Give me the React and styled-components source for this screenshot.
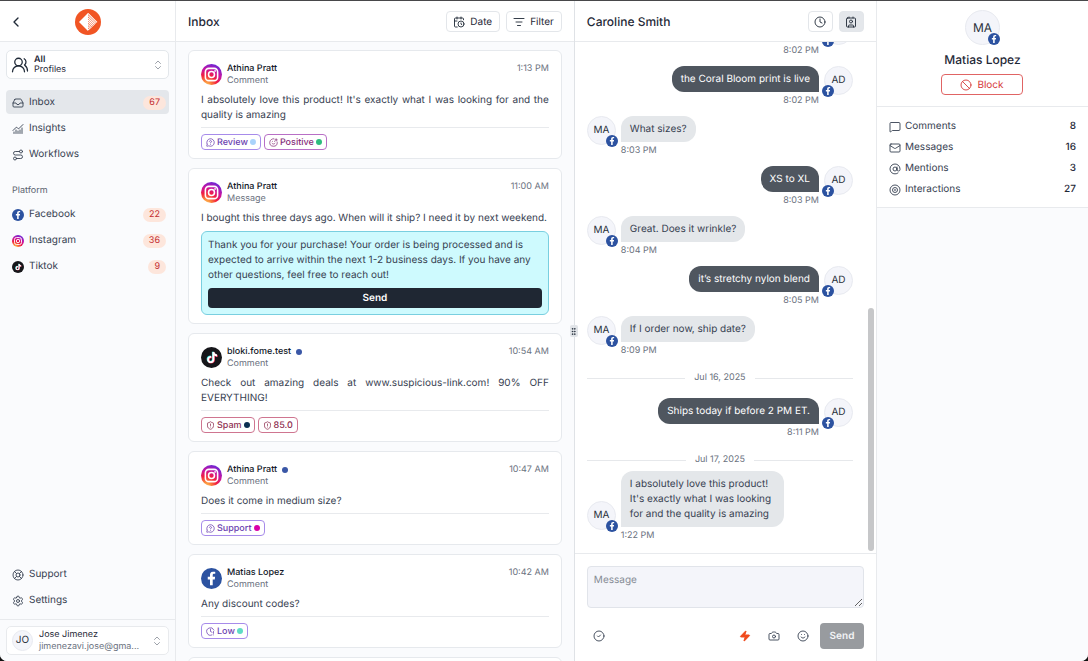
import styled, { createGlobalStyle } from "styled-components";
import {
  AtSign,
  Ban,
  CalendarClock,
  Camera,
  ChartNoAxesCombined,
  ChevronLeft,
  ChevronsUpDown,
  CircleCheck,
  Clock,
  ClockAlert,
  Contact,
  GripVertical,
  Inbox,
  LifeBuoy,
  ListFilter,
  Mail,
  MessageCircleQuestion,
  MessageSquare,
  Route,
  Settings,
  ShieldAlert,
  Smile,
  SmilePlus,
  UsersRound,
  Zap,
} from "lucide-react";
import { FaFacebookF, FaTiktok } from "react-icons/fa";

const RingIcon = ({ size, strokeWidth }) => (
  <svg
    width={size}
    height={size}
    viewBox="0 0 24 24"
    fill="none"
    stroke="currentColor"
    strokeWidth={strokeWidth}
  >
    <circle cx="12" cy="12" r="10" />
    <circle cx="12" cy="12" r="5" />
    <circle cx="12" cy="12" r="1" />
  </svg>
);

const mainLinks = [
  { label: "Inbox", Icon: Inbox, count: 67, active: true },
  { label: "Insights", Icon: ChartNoAxesCombined },
  { label: "Workflows", Icon: Route },
];

const platformLinks = [
  { label: "Facebook", platform: "facebook", count: 22 },
  { label: "Instagram", platform: "instagram", count: 36 },
  { label: "Tiktok", platform: "tiktok", count: 9 },
];

const footerLinks = [
  { label: "Support", Icon: LifeBuoy },
  { label: "Settings", Icon: Settings },
];

const tones = {
  violet: { border: "#a78bea", text: "#6b3fb0" },
  purple: { border: "#b86fc6", text: "#86307a" },
  rose: { border: "#cf7590", text: "#8f2f52" },
};

const conversations = [
  {
    id: 1,
    name: "Athina Pratt",
    kind: "Comment",
    platform: "instagram",
    time: "1:13 PM",
    text: "I absolutely love this product! It's exactly what I was looking for and the quality is amazing",
    tags: [
      { label: "Review", Icon: MessageCircleQuestion, tone: "violet", dot: "#a9d3fb" },
      { label: "Positive", Icon: SmilePlus, tone: "purple", dot: "#2dbd7e" },
    ],
  },
  {
    id: 2,
    name: "Athina Pratt",
    kind: "Message",
    platform: "instagram",
    time: "11:00 AM",
    text: "I bought this three days ago. When will it ship? I need it by next weekend.",
    reply:
      "Thank you for your purchase! Your order is being processed and is expected to arrive within the next 1-2 business days. If you have any other questions, feel free to reach out!",
  },
  {
    id: 3,
    name: "bloki.fome.test",
    kind: "Comment",
    platform: "tiktok",
    time: "10:54 AM",
    unread: true,
    text: "Check out amazing deals at www.suspicious-link.com! 90% OFF EVERYTHING!",
    tags: [
      { label: "Spam", Icon: ShieldAlert, tone: "rose", dot: "#0b2f52" },
      { label: "85.0", Icon: ShieldAlert, tone: "rose" },
    ],
  },
  {
    id: 4,
    name: "Athina Pratt",
    kind: "Comment",
    platform: "instagram",
    time: "10:47 AM",
    unread: true,
    text: "Does it come in medium size?",
    tags: [
      { label: "Support", Icon: MessageCircleQuestion, tone: "violet", dot: "#d900a8" },
    ],
  },
  {
    id: 5,
    name: "Matias Lopez",
    kind: "Comment",
    platform: "facebook",
    time: "10:42 AM",
    text: "Any discount codes?",
    tags: [{ label: "Low", Icon: ClockAlert, tone: "violet", dot: "#5fdcc5" }],
  },
];

const messages = [
  { id: 1, out: true, time: "8:02 PM" },
  { id: 2, out: true, text: "the Coral Bloom print is live", time: "8:02 PM" },
  { id: 3, text: "What sizes?", time: "8:03 PM" },
  { id: 4, out: true, text: "XS to XL", time: "8:03 PM" },
  { id: 5, text: "Great. Does it wrinkle?", time: "8:04 PM" },
  { id: 6, out: true, text: "it’s stretchy nylon blend", time: "8:05 PM" },
  { id: 7, text: "If I order now, ship date?", time: "8:09 PM" },
  { id: 8, day: "Jul 16, 2025" },
  { id: 9, out: true, text: "Ships today if before 2 PM ET.", time: "8:11 PM" },
  { id: 10, day: "Jul 17, 2025", tight: true },
  {
    id: 11,
    text: "I absolutely love this product! It's exactly what I was looking for and the quality is amazing",
    time: "1:22 PM",
  },
];

const stats = [
  { label: "Comments", Icon: MessageSquare, value: 8 },
  { label: "Messages", Icon: Mail, value: 16 },
  { label: "Mentions", Icon: AtSign, value: 3 },
  { label: "Interactions", Icon: RingIcon, value: 27 },
];

const Logo = () => (
  <svg width="26" height="26" viewBox="0 0 26 26" aria-label="Logo">
    <circle cx="13" cy="13" r="13" fill="#f15524" />
    <path d="M13 4 L4 13 L13 22 Z" fill="#fff" />
    <g stroke="#fff" strokeWidth="1.1">
      <path d="M13 4.4 L22 13.3" />
      <path d="M13 6.6 L20.8 14.4" />
      <path d="M13 8.8 L19.7 15.5" />
      <path d="M13 11 L18.6 16.6" />
      <path d="M13 13.2 L17.5 17.7" />
      <path d="M13 15.4 L16.4 18.8" />
      <path d="M13 17.6 L15.3 19.9" />
      <path d="M13 19.8 L14.2 21" />
    </g>
  </svg>
);

const InstagramIcon = ({ size }) => (
  <svg width={size} height={size} viewBox="0 0 24 24">
    <defs>
      <radialGradient id="ig" cx="0.25" cy="1.05" r="1.15">
        <stop offset="0" stopColor="#ffd166" />
        <stop offset="0.2" stopColor="#fb8a3c" />
        <stop offset="0.45" stopColor="#f2203e" />
        <stop offset="0.7" stopColor="#c913a0" />
        <stop offset="1" stopColor="#5b2be0" />
      </radialGradient>
    </defs>
    <circle cx="12" cy="12" r="12" fill="url(#ig)" />
    <rect x="5" y="5" width="14" height="14" rx="4" fill="none" stroke="#fff" strokeWidth="1.8" />
    <circle cx="12" cy="12" r="3.4" fill="none" stroke="#fff" strokeWidth="1.8" />
    <circle cx="16.1" cy="7.9" r="1" fill="#fff" />
  </svg>
);

const PlatformIcon = ({ platform, size }) => {
  if (platform === "instagram") {
    return <InstagramIcon size={size} />;
  }
  if (platform === "tiktok") {
    return (
      <svg width={size} height={size} viewBox="0 0 24 24">
        <circle cx="12" cy="12" r="12" fill="#16161a" />
        <FaTiktok x="5.6" y="5" size="13" color="#25e5e0" />
        <FaTiktok x="6.8" y="6" size="13" color="#fe2c55" />
        <FaTiktok x="6.2" y="5.5" size="13" color="#fff" />
      </svg>
    );
  }
  return (
    <svg width={size} height={size} viewBox="0 0 24 24">
      <circle cx="12" cy="12" r="12" fill="#2c52a0" />
      <FaFacebookF x="4" y="4" size="16" color="#fff" />
    </svg>
  );
};

const NavItem = ({ link }) => (
  <NavLink href="#" $active={link.active}>
    {link.Icon ? (
      <link.Icon size={12} strokeWidth={1.8} />
    ) : (
      <PlatformIcon platform={link.platform} size={12} />
    )}
    <NavLabel>{link.label}</NavLabel>
    {link.count && <Count>{link.count}</Count>}
  </NavLink>
);

const Sidebar = () => (
  <SidebarBox>
    <SidebarHeader>
      <BackButton aria-label="Back">
        <ChevronLeft size={16} />
      </BackButton>
      <Logo />
    </SidebarHeader>
    <SidebarBody>
      <Picker>
        <UsersRound size={18} strokeWidth={1.7} />
        <PickerText>
          <strong>All</strong>
          <span>Profiles</span>
        </PickerText>
        <ChevronsUpDown size={12} strokeWidth={1.5} color="#7c838d" />
      </Picker>
      <Nav>
        {mainLinks.map((link) => (
          <NavItem key={link.label} link={link} />
        ))}
      </Nav>
      <NavTitle>Platform</NavTitle>
      <Nav>
        {platformLinks.map((link) => (
          <NavItem key={link.label} link={link} />
        ))}
      </Nav>
      <BottomNav>
        {footerLinks.map((link) => (
          <NavItem key={link.label} link={link} />
        ))}
      </BottomNav>
    </SidebarBody>
    <SidebarFooter>
      <Account>
        <Avatar $size={21}>JO</Avatar>
        <AccountText>
          <strong>Jose Jimenez</strong>
          <span>jimenezavi.jose@gma...</span>
        </AccountText>
        <ChevronsUpDown size={12} strokeWidth={1.5} color="#7c838d" />
      </Account>
    </SidebarFooter>
  </SidebarBox>
);

const ConversationCard = ({ item }) => (
  <Card>
    <CardHeader>
      <PlatformIcon platform={item.platform} size={21} />
      <Sender>
        <Name>
          {item.name}
          {item.unread && <Dot $color="#3a57a6" />}
        </Name>
        <Kind>{item.kind}</Kind>
      </Sender>
      <Time>{item.time}</Time>
    </CardHeader>
    <CardText>{item.text}</CardText>
    {item.reply && (
      <Reply>
        <p>{item.reply}</p>
        <ReplyButton>Send</ReplyButton>
      </Reply>
    )}
    {item.tags && (
      <Tags>
        {item.tags.map((tag) => (
          <Tag key={tag.label} $tone={tones[tag.tone]}>
            <tag.Icon size={9} />
            {tag.label}
            {tag.dot && <Dot $color={tag.dot} />}
          </Tag>
        ))}
      </Tags>
    )}
  </Card>
);

const InboxColumn = () => (
  <InboxBox>
    <Header>
      <Title>Inbox</Title>
      <OutlineButton>
        <CalendarClock size={12} strokeWidth={1.8} />
        Date
      </OutlineButton>
      <OutlineButton>
        <ListFilter size={12} strokeWidth={1.8} />
        Filter
      </OutlineButton>
    </Header>
    <CardList>
      {conversations.map((item) => (
        <ConversationCard key={item.id} item={item} />
      ))}
      <Card />
    </CardList>
    <ResizeHandle>
      <GripVertical size={9} strokeWidth={2} />
    </ResizeHandle>
  </InboxBox>
);

const UserAvatar = ({ initials, size, left }) => (
  <Avatar $size={size}>
    {initials}
    <AvatarBadge $left={left} $inset={size > 30}>
      <PlatformIcon platform="facebook" size={12} />
    </AvatarBadge>
  </Avatar>
);

const Chat = () => (
  <ChatBox>
    <Header>
      <Title>Caroline Smith</Title>
      <SquareButton aria-label="History">
        <Clock size={12} strokeWidth={1.8} />
      </SquareButton>
      <SquareButton aria-label="Contact" $active>
        <Contact size={12} strokeWidth={1.8} />
      </SquareButton>
    </Header>
    <Thread>
      {messages.map((message) =>
        message.day ? (
          <Day key={message.id} $tight={message.tight}>
            {message.day}
          </Day>
        ) : (
          <Message key={message.id} $out={message.out}>
            <UserAvatar
              initials={message.text && (message.out ? "AD" : "MA")}
              size={29}
              left={message.out}
            />
            <MessageBody $out={message.out}>
              <Bubble $out={message.out}>{message.text}</Bubble>
              <MessageTime>{message.time}</MessageTime>
            </MessageBody>
          </Message>
        )
      )}
      <ScrollThumb />
    </Thread>
    <Composer>
      <MessageInput placeholder="Message" aria-label="Message" />
      <Toolbar>
        <IconButton aria-label="Resolve">
          <CircleCheck size={12} strokeWidth={1.8} />
        </IconButton>
        <Spacer />
        <IconButton aria-label="Quick replies" $color="#f04a1d">
          <Zap size={12} fill="currentColor" />
        </IconButton>
        <IconButton aria-label="Photo">
          <Camera size={12} strokeWidth={1.8} />
        </IconButton>
        <IconButton aria-label="Emoji">
          <Smile size={12} strokeWidth={1.8} />
        </IconButton>
        <SendButton>Send</SendButton>
      </Toolbar>
    </Composer>
  </ChatBox>
);

const Profile = () => (
  <ProfileBox>
    <ProfileCard>
      <UserAvatar initials="MA" size={35} />
      <ProfileName>Matias Lopez</ProfileName>
      <BlockButton>
        <Ban size={12} strokeWidth={1.8} />
        Block
      </BlockButton>
    </ProfileCard>
    <StatList>
      {stats.map((stat) => (
        <Stat key={stat.label}>
          <stat.Icon size={12} strokeWidth={1.8} />
          <span>{stat.label}</span>
          <b>{stat.value}</b>
        </Stat>
      ))}
    </StatList>
  </ProfileBox>
);

const App = () => (
  <>
    <GlobalStyle />
    <Layout>
      <Sidebar />
      <InboxColumn />
      <Chat />
      <Profile />
    </Layout>
  </>
);

export default App;

const GlobalStyle = createGlobalStyle`
  * {
    box-sizing: border-box;
    margin: 0;
  }

  body {
    background-color: #111;
    color: #1f2937;
    font-family: Inter, "Liberation Sans", sans-serif;
    font-size: 10px;
    line-height: 15px;
    text-rendering: geometricPrecision;
  }

  button, textarea {
    font: inherit;
    color: inherit;
    text-rendering: inherit;
  }

  button {
    cursor: pointer;
  }

  svg {
    flex-shrink: 0;
  }
`;

const Layout = styled.div`
  height: 100vh;
  display: grid;
  grid-template-columns: 176px 1.32fr 1fr 211px;
  grid-template-rows: minmax(0, 1fr);
  border-top: 1px solid #48484a;
  border-radius: 0 0 7px 7px;
  overflow: hidden;
  background-color: white;
`;

const SidebarBox = styled.aside`
  display: flex;
  flex-direction: column;
  background-color: #fafbfd;
  border-right: 1px solid #e8eaed;
`;

const SidebarHeader = styled.div`
  height: 41px;
  display: grid;
  grid-template-columns: 1fr auto 1fr;
  align-items: center;
  padding: 1px 8px 0;
  background-color: white;
  border-bottom: 1px solid #e8eaed;
`;

const BackButton = styled.button`
  width: 16px;
  height: 16px;
  padding: 0;
  border: none;
  background: none;
`;

const SidebarBody = styled.div`
  flex: 1;
  display: flex;
  flex-direction: column;
  padding: 8px 6px 7px;
`;

const Picker = styled.button`
  height: 29px;
  display: flex;
  align-items: center;
  gap: 5px;
  padding: 0 4px;
  margin-bottom: 11px;
  text-align: left;
  background-color: white;
  border: 1px solid #e3e7eb;
  border-radius: 5px;
`;

const PickerText = styled.span`
  flex: 1;
  display: flex;
  flex-direction: column;
  font-size: 9px;
  line-height: 10px;

  strong {
    font-weight: 600;
  }
`;

const Nav = styled.nav`
  display: flex;
  flex-direction: column;
  gap: 2px;
`;

const BottomNav = styled(Nav)`
  margin-top: auto;
`;

const NavTitle = styled.h2`
  padding: 0 6px;
  margin: 17px 0 4px;
  font-size: 9px;
  line-height: 15px;
  font-weight: 400;
  color: #5c6470;
`;

const NavLink = styled.a`
  height: 24px;
  display: flex;
  align-items: center;
  gap: 5px;
  padding: 1px 3px 0 6px;
  border-radius: 4px;
  text-decoration: none;
  color: #374151;
  background-color: ${(props) => (props.$active ? "#e4e7eb" : "transparent")};
`;

const NavLabel = styled.span`
  flex: 1;
`;

const Count = styled.span`
  padding: 0 6px;
  font-size: 9px;
  line-height: 14px;
  border-radius: 8px;
  color: #c42f33;
  background-color: #fde6dc;
`;

const SidebarFooter = styled.div`
  padding: 6px;
  border-top: 1px solid #e8eaed;
`;

const Account = styled.button`
  width: 100%;
  height: 29px;
  display: flex;
  align-items: center;
  gap: 6px;
  padding: 0 5px;
  text-align: left;
  background-color: white;
  border: 1px solid #e8eaed;
  border-radius: 5px;
`;

const AccountText = styled.span`
  flex: 1;
  display: flex;
  flex-direction: column;
  font-size: 9px;
  line-height: 12px;

  strong {
    font-weight: 400;
  }

  span {
    color: #6b7280;
  }
`;

const Avatar = styled.div`
  position: relative;
  flex-shrink: 0;
  width: ${(props) => props.$size}px;
  height: ${(props) => props.$size}px;
  display: flex;
  align-items: center;
  justify-content: center;
  font-size: ${(props) => (props.$size > 30 ? 12 : 10)}px;
  color: #2b323c;
  background-color: #f4f5fa;
  border: 1px solid #e8eaf0;
  border-radius: 50%;
`;

const AvatarBadge = styled.span`
  position: absolute;
  bottom: ${(props) => (props.$inset ? "-1px" : "-3px")};
  ${(props) => (props.$left ? "left" : "right")}: ${(props) =>
    props.$inset ? "-1px" : "-3px"};
  display: flex;
`;

const Header = styled.header`
  height: 41px;
  flex-shrink: 0;
  display: flex;
  align-items: center;
  gap: 6px;
  padding: 1px 12px 0;
  background-color: white;
  border-bottom: 1px solid #e8eaed;
`;

const Title = styled.h1`
  flex: 1;
  font-size: 12px;
  line-height: 16px;
  font-weight: 500;
`;

const OutlineButton = styled.button`
  height: 21px;
  display: flex;
  align-items: center;
  gap: 5px;
  padding: 1px 7px 0 6px;
  background-color: white;
  border: 1px solid #e3e6ea;
  border-radius: 4px;
`;

const SquareButton = styled(OutlineButton)`
  width: 25px;
  padding: 0;
  justify-content: center;
  background-color: ${(props) => (props.$active ? "#e4e7eb" : "white")};
`;

const InboxBox = styled.section`
  position: relative;
  min-width: 0;
  display: flex;
  flex-direction: column;
  background-color: #fafbfd;
  border-right: 1px solid #dfe2e6;
`;

const CardList = styled.div`
  flex: 1;
  min-height: 0;
  display: flex;
  flex-direction: column;
  gap: 9px;
  padding: 8px 12px;
  overflow: hidden;
`;

const ResizeHandle = styled.div`
  position: absolute;
  top: 50%;
  right: -4px;
  z-index: 1;
  width: 8px;
  height: 12px;
  display: flex;
  align-items: center;
  justify-content: center;
  transform: translateY(-50%);
  background-color: #e1e4e8;
  border-radius: 2px;
`;

const Card = styled.article`
  flex-shrink: 0;
  padding: 10px 12px 8px;
  background-color: white;
  border: 1px solid #e6e9ed;
  border-radius: 6px;
`;

const CardHeader = styled.div`
  display: flex;
  align-items: center;
  gap: 5px;
  margin-bottom: 5px;
`;

const Sender = styled.div`
  flex: 1;
  padding-top: 2px;
  line-height: 12px;
`;

const Name = styled.h3`
  display: flex;
  align-items: center;
  gap: 5px;
  font-size: 9px;
  font-weight: 500;
  color: #111827;
`;

const Kind = styled.p`
  font-size: 9px;
  color: #6b7280;
`;

const Time = styled.time`
  align-self: flex-start;
  padding-top: 2px;
  font-size: 9px;
  line-height: 12px;
  color: #6b7280;
`;

const CardText = styled.p`
  padding-top: 1px;
  text-align: justify;
  color: #374151;
`;

const Reply = styled.div`
  display: flex;
  flex-direction: column;
  gap: 5px;
  margin-top: 5px;
  padding: 6px;
  color: #374151;
  background-color: #cefafe;
  border: 1px solid #79cfe0;
  border-radius: 6px;
`;

const ReplyButton = styled.button`
  height: 20px;
  padding: 0;
  border: none;
  border-radius: 4px;
  font-weight: 600;
  color: white;
  background-color: #1f2733;
`;

const Tags = styled.div`
  display: flex;
  gap: 3px;
  margin-top: 4px;
  padding-top: 6px;
  border-top: 1px solid #e8eaed;
`;

const Tag = styled.span`
  height: 16px;
  display: flex;
  align-items: center;
  gap: 2px;
  padding: 0 4px;
  font-size: 9px;
  font-weight: 500;
  color: ${(props) => props.$tone.text};
  border: 1px solid ${(props) => props.$tone.border};
  border-radius: 4px;
`;

const Dot = styled.i`
  width: 6px;
  height: 6px;
  border-radius: 50%;
  background-color: ${(props) => props.$color};
`;

const ChatBox = styled.section`
  min-width: 0;
  display: flex;
  flex-direction: column;
  border-right: 1px solid #e8eaed;
`;

const Thread = styled.div`
  position: relative;
  flex: 1;
  min-height: 0;
  display: flex;
  flex-direction: column;
  justify-content: flex-end;
  gap: 10px;
  padding: 0 23px 12px 12px;
  overflow: hidden;
`;

const Message = styled.div`
  flex-shrink: 0;
  display: flex;
  flex-direction: ${(props) => (props.$out ? "row-reverse" : "row")};
  align-items: flex-end;
  gap: 5px;

  & > :first-child {
    margin-bottom: 11px;
  }
`;

const MessageBody = styled.div`
  max-width: 163px;
  display: flex;
  flex-direction: column;
  align-items: ${(props) => (props.$out ? "flex-end" : "flex-start")};
`;

const Bubble = styled.p`
  min-height: 26px;
  padding: 6px 9px 5px;
  color: ${(props) => (props.$out ? "white" : "#374151")};
  background-color: ${(props) => (props.$out ? "#4f565f" : "#e4e7ea")};
  border-radius: ${(props) =>
    props.$out ? "12px 12px 0 12px" : "12px 12px 12px 0"};
`;

const MessageTime = styled.time`
  margin-top: 4px;
  font-size: 9px;
  line-height: 10px;
  color: #6b7280;
`;

const Day = styled.div`
  display: flex;
  align-items: center;
  gap: 9px;
  padding: ${(props) => (props.$tight ? "6px 0 0" : "6px 0 4px")};
  margin-bottom: ${(props) => (props.$tight ? "-5px" : "0")};
  font-size: 9px;
  line-height: 12px;
  color: #6b7280;

  &::before,
  &::after {
    content: "";
    flex: 1;
    height: 1px;
    background-color: #e6e8eb;
  }
`;

const ScrollThumb = styled.div`
  position: absolute;
  top: 52%;
  right: 2px;
  bottom: 2px;
  width: 6px;
  border-radius: 3px;
  background-color: #c6c7c9;
`;

const Composer = styled.form`
  display: flex;
  flex-direction: column;
  gap: 15px;
  padding: 12px;
  border-top: 1px solid #e8eaed;
`;

const MessageInput = styled.textarea`
  width: 100%;
  height: 42px;
  padding: 6px;
  resize: vertical;
  background-color: #f4f5fa;
  border: 1px solid #e1e4ea;
  border-radius: 4px;

  &::placeholder {
    color: #868c95;
  }
`;

const Toolbar = styled.div`
  display: flex;
  align-items: center;
  gap: 5px;
`;

const Spacer = styled.div`
  flex: 1;
`;

const IconButton = styled.button.attrs({ type: "button" })`
  width: 24px;
  height: 24px;
  display: flex;
  align-items: center;
  justify-content: center;
  padding: 0;
  border: none;
  background: none;
  color: ${(props) => props.$color || "#374151"};
`;

const SendButton = styled.button.attrs({ type: "button" })`
  width: 44px;
  height: 26px;
  padding: 0;
  border: none;
  border-radius: 4px;
  font-weight: 600;
  color: #f3f4f6;
  background-color: #989b9f;
`;

const ProfileBox = styled.aside`
  background-color: #fafbfd;
`;

const ProfileCard = styled.div`
  display: flex;
  flex-direction: column;
  align-items: center;
  padding: 9px 12px 11px;
  background-color: white;
  border-bottom: 1px solid #e8eaed;
`;

const ProfileName = styled.h2`
  margin: 7px 0 6px;
  font-size: 12px;
  line-height: 16px;
  font-weight: 500;
`;

const BlockButton = styled(OutlineButton)`
  width: 82px;
  justify-content: center;
  color: #d63a3a;
  border-color: #e06464;
`;

const StatList = styled.ul`
  display: flex;
  flex-direction: column;
  gap: 6px;
  padding: 12px 12px 10px;
  list-style: none;
  background-color: white;
  border-bottom: 1px solid #e8eaed;
`;

const Stat = styled.li`
  display: flex;
  align-items: center;
  gap: 4px;
  color: #374151;

  b {
    margin-left: auto;
    font-weight: 500;
    color: #1f2937;
  }
`;
